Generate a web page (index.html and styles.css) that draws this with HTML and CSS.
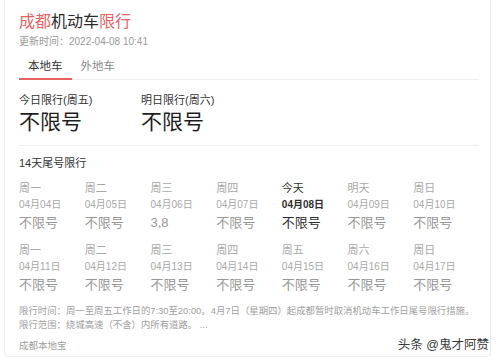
FILE: index.html
```html
<!DOCTYPE html>
<html lang="zh-CN">
<head>
<meta charset="utf-8">
<title>成都机动车限行</title>
<link rel="stylesheet" href="styles.css">
</head>
<body>
<div class="card">
  <h1 class="title"><span class="red">成都</span>机动车<span class="red">限行</span></h1>
  <div class="updated">更新时间：2022-04-08 10:41</div>
  <div class="tabs">
    <div class="tab active">本地车</div>
    <div class="tab">外地车</div>
  </div>
  <div class="today">
    <div class="today-item">
      <div class="today-label">今日限行(周五)</div>
      <div class="today-value">不限号</div>
    </div>
    <div class="today-item">
      <div class="today-label">明日限行(周六)</div>
      <div class="today-value">不限号</div>
    </div>
  </div>
  <div class="section-title">14天尾号限行</div>
  <div class="grid">
    <div class="day"><div class="wd">周一</div><div class="dt">04月04日</div><div class="val">不限号</div></div>
    <div class="day"><div class="wd">周二</div><div class="dt">04月05日</div><div class="val">不限号</div></div>
    <div class="day"><div class="wd">周三</div><div class="dt">04月06日</div><div class="val">3,8</div></div>
    <div class="day"><div class="wd">周四</div><div class="dt">04月07日</div><div class="val">不限号</div></div>
    <div class="day current"><div class="wd">今天</div><div class="dt">04月08日</div><div class="val">不限号</div></div>
    <div class="day"><div class="wd">明天</div><div class="dt">04月09日</div><div class="val">不限号</div></div>
    <div class="day"><div class="wd">周日</div><div class="dt">04月10日</div><div class="val">不限号</div></div>
    <div class="day"><div class="wd">周一</div><div class="dt">04月11日</div><div class="val">不限号</div></div>
    <div class="day"><div class="wd">周二</div><div class="dt">04月12日</div><div class="val">不限号</div></div>
    <div class="day"><div class="wd">周三</div><div class="dt">04月13日</div><div class="val">不限号</div></div>
    <div class="day"><div class="wd">周四</div><div class="dt">04月14日</div><div class="val">不限号</div></div>
    <div class="day"><div class="wd">周五</div><div class="dt">04月15日</div><div class="val">不限号</div></div>
    <div class="day"><div class="wd">周六</div><div class="dt">04月16日</div><div class="val">不限号</div></div>
    <div class="day"><div class="wd">周日</div><div class="dt">04月17日</div><div class="val">不限号</div></div>
  </div>
  <div class="notes">
    <p>限行时间：周一至周五工作日的7:30至20:00。4月7日（星期四）起成都暂时取消机动车工作日尾号限行措施。</p>
    <p>限行范围：绕城高速（不含）内所有道路。 ...</p>
  </div>
  <div class="source">成都本地宝</div>
</div>
<div class="watermark">头条 @鬼才阿赞</div>
</body>
</html>
```

FILE: styles.css
```css
html, body {
  margin: 0;
  padding: 0;
  background: #ffffff;
}
body {
  font-family: "Liberation Sans", "Noto Sans CJK SC", sans-serif;
  color: #333;
  width: 500px;
  height: 360px;
  overflow: hidden;
  position: relative;
}
.card {
  box-sizing: border-box;
  width: 487px;
  margin-left: 4px;
  border: 1px solid #ececec;
  border-top: none;
  border-radius: 0 0 5px 5px;
  padding: 12px 11px 3px 14px;
  background: #fff;
}
.title {
  margin: 0;
  font-size: 16px;
  font-weight: normal;
  line-height: 20px;
  color: #2b2b2b;
}
.red {
  color: #e8625f;
}
.updated {
  margin-top: 3px;
  font-size: 10px;
  line-height: 14px;
  color: #9a9a9a;
}
.tabs {
  margin-top: 9px;
  display: flex;
  border-bottom: 1px solid #eeeeee;
}
.tab {
  padding: 0 9px 4px;
  font-size: 11.5px;
  line-height: 16px;
  color: #8a8a8a;
  margin-bottom: -1px;
  border-bottom: 2px solid transparent;
}
.tab.active {
  color: #333;
  border-bottom-color: #e8625f;
}
.today {
  display: flex;
  padding-top: 12px;
  padding-bottom: 10px;
  border-bottom: 1px solid #eeeeee;
}
.today-item {
  width: 122px;
}
.today-label {
  font-size: 11px;
  line-height: 16px;
  color: #333;
}
.today-value {
  margin-top: 1px;
  font-size: 21px;
  line-height: 26px;
  color: #1e1e1e;
}
.section-title {
  margin-top: 9px;
  font-size: 11px;
  line-height: 16px;
  color: #333;
}
.grid {
  margin-top: 9px;
  display: grid;
  grid-template-columns: repeat(7, 1fr);
  row-gap: 9px;
}
.wd {
  font-size: 11px;
  line-height: 16px;
  color: #a8a8a8;
}
.dt {
  font-size: 10px;
  line-height: 17px;
  color: #a8a8a8;
}
.val {
  font-size: 13px;
  line-height: 20px;
  color: #979797;
}
.current .wd,
.current .val {
  color: #2e2e2e;
}
.current .dt {
  color: #2e2e2e;
  font-weight: bold;
}
.notes {
  margin-top: 9px;
}
.notes p {
  margin: 0;
  font-size: 9.4px;
  line-height: 14px;
  color: #a0a0a0;
  white-space: nowrap;
}
.source {
  margin-top: 7px;
  font-size: 9.5px;
  line-height: 14px;
  color: #a0a0a0;
}
.watermark {
  position: absolute;
  right: 11px;
  top: 337px;
  font-size: 12.5px;
  line-height: 16px;
  color: #3a3a3a;
  text-shadow: 0 0 2px #fff, 0 0 2px #fff;
}
```
